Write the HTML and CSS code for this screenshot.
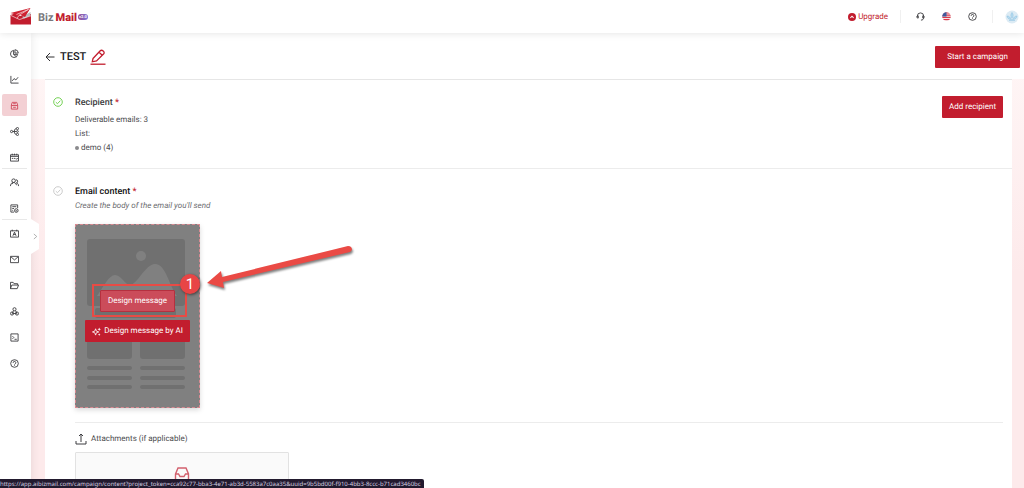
FILE: index.html
```html
<!DOCTYPE html>
<html lang="en">
<head>
  <meta charset="UTF-8" />
  <meta name="viewport" content="width=device-width, initial-scale=1.0"/>
  <title>BizMail - TEST</title>
  <link rel="stylesheet" href="styles.css">
</head>
<body>
  <header class="topbar">
    <a href="#" class="brand" aria-label="BizMail">
      <svg class="brand-mark" viewBox="0 0 22 17">
        <path d="M0.500 7L5 5.500L9 8L14 8L20 6L21 6V16.500H0.500Z" fill="#c21d2e"/>
        <path d="M12 9L20.500 4V7.500L14 10.500Z" fill="#b9b9bd"/>
        <path d="M0.500 5L20.500 0L15 9L10 7L7 10.500L6 6.500Z" fill="#cf2232"/>
        <path d="M6.500 6.500L18.500 1.400L9 7.300L7 10.500M1 7.500L9.500 11.500L21 7.800" fill="none" stroke="#fff" stroke-width=".6"/>
      </svg>
      <span class="brand-name">Biz<b>Mail</b></span>
      <span class="brand-tag">v2.0</span>
    </a>
    <nav class="topbar-nav">
      <a href="#" class="upgrade">
        <svg viewBox="0 0 10 10"><circle cx="5" cy="5" r="5" fill="#c21d2e"/><path d="M3 6L5 4L7 6" fill="none" stroke="#fff" stroke-width="1.300"/></svg>
        Upgrade
      </a>
      <span class="divider"></span>
      <a href="#" class="nav-icon" aria-label="Support">
        <svg class="line-icon" viewBox="0 0 20 20"><path d="M3 12V9a7 7 0 0 1 14 0v4c0 3-2 5-6 5M3 8.500h2v5H4a3 3 0 0 1-2-4M17 8.500h-2v5H16a3 3 0 0 0 2-4"/></svg>
      </a>
      <a href="#" class="nav-icon" aria-label="Language">
        <svg viewBox="0 0 20 20">
          <clipPath id="flag"><circle cx="10" cy="10" r="9.500"/></clipPath>
          <g clip-path="url(#flag)">
            <path fill="#f6e6e8" d="M0 0h20v20H0z"/>
            <path d="M0 2h20M0 7h20M0 12h20M0 17h20" stroke="#d9394a" stroke-width="2.800"/>
            <path fill="#3c5a9c" d="M0 0h10v10H0z"/>
          </g>
        </svg>
      </a>
      <a href="#" class="nav-icon" aria-label="Help">
        <svg class="line-icon" viewBox="0 0 20 20"><use href="#i-help"/></svg>
      </a>
      <span class="divider"></span>
      <a href="#" class="avatar" aria-label="Account">
        <svg viewBox="0 0 14 14">
          <circle cx="7" cy="7" r="6.500" fill="#dcebf4"/>
          <path d="M7 2.500C8.500 4.500 8.500 6 7 8C5.500 6 5.500 4.500 7 2.500ZM2 6C4 6 5.500 7.500 6.500 9.500C4 9.500 2.500 8.500 2 6ZM12 6C10 6 8.500 7.500 7.500 9.500C10 9.500 11.500 8.500 12 6ZM4 10.500H10" fill="#b8dcf0" stroke="#8fc3e2" stroke-width=".6"/>
        </svg>
      </a>
    </nav>
  </header>

  <div class="layout">
    <aside class="sidebar">
      <nav class="menu">
        <a href="#" aria-label="Dashboard"><svg class="line-icon" viewBox="0 0 20 20"><path d="M8 3a8 8 0 1 0 9 9H8zM11 1.500V9h7.500A8 8 0 0 0 11 1.500zM8 12l6 5"/></svg></a>
        <a href="#" aria-label="Reports"><svg class="line-icon" viewBox="0 0 20 20"><path d="M2 2v16h17M5 13l4-5 4 3 5-6"/></svg></a>
        <a href="#" class="active" aria-label="Campaigns"><svg class="line-icon" viewBox="0 0 20 20"><path d="M3 9L5 3h10l2 6v9H3zM3 10h14M7 14h6M7 6h6"/></svg></a>
        <a href="#" aria-label="Automation"><svg class="line-icon" viewBox="0 0 20 20"><circle cx="3.500" cy="10" r="2.500"/><path d="M6 10h8M14 3.500q-4 0-5 6.500q1 6.500 5 6.500"/><circle cx="16.500" cy="3.500" r="2.500"/><circle cx="16.500" cy="10" r="2"/><circle cx="16.500" cy="16.500" r="2.500"/></svg></a>
        <a href="#" aria-label="Calendar"><svg class="line-icon" viewBox="0 0 20 20"><path d="M1 4h18v14H1zM1 7.500h18M5 1.500V5M10 1.500V5M15 1.500V5M4 12h3M8.500 12h3M13 12l1.500 2 3-3"/></svg></a>
      </nav>
      <nav class="menu">
        <a href="#" aria-label="Contacts"><svg class="line-icon" viewBox="0 0 20 20"><circle cx="8" cy="6" r="4"/><path d="M1 18c0-5 3-8 6.500-8s6 2 7 6M13 4a3.500 3.500 0 0 1 1 7c3 0 5 3 5 7M4 14l3-3"/></svg></a>
        <a href="#" aria-label="Forms"><svg class="line-icon" viewBox="0 0 20 20"><path d="M9 18H2V2h15v7M5 6h9M5 10h4M5 14h2"/><circle cx="14" cy="14.500" r="4"/><path d="M12 14.500l1.500 1.500 3-3"/></svg></a>
      </nav>
      <nav class="menu">
        <a href="#" aria-label="Templates"><svg class="line-icon" viewBox="0 0 20 20"><path d="M1 4h18v14H1zM5 1.500V5M15 1.500V5M6.500 15L10 7l3.500 8M8 12h4"/></svg></a>
        <a href="#" aria-label="Messages"><svg class="line-icon" viewBox="0 0 20 20"><path d="M1 3h18v14H1zM2 4l8 7 8-7"/></svg></a>
        <a href="#" aria-label="Files"><svg class="line-icon" viewBox="0 0 20 20"><path d="M1 17V3h6l2 3h8v3M1 17l3-8h15l-3 8z"/></svg></a>
        <a href="#" aria-label="Integrations"><svg class="line-icon" viewBox="0 0 20 20"><circle cx="10" cy="5" r="3.500"/><circle cx="4.500" cy="14.500" r="3.500"/><circle cx="15.500" cy="14.500" r="3.500"/><path d="M8 8l-3 6M12 8l3.500 6M5 14.500h10"/></svg></a>
        <a href="#" aria-label="API"><svg class="line-icon" viewBox="0 0 20 20"><path d="M2 2h16v16H2zM5.500 7l3 3-3 3M10 14h5"/></svg></a>
        <a href="#" aria-label="Help"><svg class="line-icon" viewBox="0 0 20 20"><g id="i-help"><circle cx="10" cy="10" r="8.500"/><path d="M7 8.500a3 3 0 1 1 4.500 2.300Q10 11.500 10 12.500M10 14v1.500"/></g></svg></a>
      </nav>
      <button class="expand" type="button" aria-label="Expand menu">
        <svg viewBox="0 0 6 8"><path d="M1 1l3.500 3L1 7"/></svg>
      </button>
    </aside>

    <main>
      <div class="page-head">
        <a href="#" class="back" aria-label="Back"><svg viewBox="0 0 10 10"><path d="M9.500 5H1M5 1L1 5L5 9"/></svg></a>
        <h1>TEST</h1>
        <button class="rename" type="button" aria-label="Rename"><svg viewBox="0 0 16 16"><path d="M3 9.500L10 2Q11.500 0.500 13.200 2T13.500 5L6.500 12L2.300 12.800ZM9 3.200L12.300 6.300"/><path d="M0.500 15.200H15.500"/></svg></button>
        <button class="btn start" type="button">Start a campaign</button>
      </div>

      <div class="card">
        <section class="step recipient">
          <svg class="check done" viewBox="0 0 10 10"><circle cx="5" cy="5" r="4.300"/><path d="M2.800 5.200L4.500 6.700L7.300 3.700"/></svg>
          <div class="step-body">
            <h2>Recipient <i>*</i></h2>
            <p>Deliverable emails: 3</p>
            <p>List:</p>
            <p class="list-item">demo (4)</p>
          </div>
          <button class="btn" type="button">Add recipient</button>
        </section>

        <section class="step content">
          <svg class="check" viewBox="0 0 10 10"><circle cx="5" cy="5" r="4.300"/><path d="M2.800 5.200L4.500 6.700L7.300 3.700"/></svg>
          <div class="step-body">
            <h2 class="current">Email content <i>*</i></h2>
            <p class="hint">Create the body of the email you'll send</p>

            <div class="preview">
              <svg class="wireframe" viewBox="0 0 125 184">
                <g fill="#707070">
                  <rect x="12" y="15" width="98" height="67" rx="3"/>
                  <rect x="20" y="84" width="81" height="10" rx="2"/>
                  <rect x="12" y="96" width="45" height="39" rx="3"/>
                  <rect x="65" y="96" width="45" height="39" rx="3"/>
                  <rect x="12" y="142" width="45" height="4" rx="2"/>
                  <rect x="65" y="142" width="45" height="4" rx="2"/>
                  <rect x="12" y="152" width="45" height="4" rx="2"/>
                  <rect x="65" y="152" width="45" height="4" rx="2"/>
                  <rect x="12" y="161" width="45" height="4" rx="2"/>
                  <rect x="65" y="161" width="45" height="4" rx="2"/>
                </g>
                <g fill="#808080">
                  <circle cx="66" cy="32" r="5"/>
                  <path d="M22 72C29 62 34 51 40 51C46 51 50 60 54 61C62 62 70 40 80 40C91 40 94 62 102 72Z"/>
                </g>
              </svg>
              <button class="btn design" type="button">Design message</button>
              <button class="btn ai" type="button">
                <svg viewBox="0 0 10 10"><path d="M4 2L4.900 4.600L7.500 5.500L4.900 6.400L4 9L3.100 6.400L0.500 5.500L3.100 4.600Z" fill="none" stroke="#fff" stroke-width=".9"/><path d="M8 0.500L8.500 2L10 2.500L8.500 3L8 4.500L7.500 3L6 2.500L7.500 2ZM8 7L8.400 8.100L9.500 8.500L8.400 8.900L8 10L7.600 8.900L6.500 8.500L7.600 8.100Z" fill="#fff"/></svg>
                Design message by AI
              </button>

              <!-- Tutorial callout -->
              <div class="callout-frame"></div>
              <div class="callout-number">1</div>
              <svg class="callout-arrow" viewBox="0 0 160 50"><path d="M5 40L19 28L20 34L146 3Q150 3 150 7L148 9L21 39L22 45Z"/></svg>
            </div>

            <div class="attachments">
              <h3><svg viewBox="0 0 12 12"><path d="M1 8V11H11V8M6 9V1M4 3L6 1L8 3"/></svg>Attachments (if applicable)</h3>
              <button class="dropzone" type="button" aria-label="Upload attachment">
                <svg viewBox="0 0 16 18"><path d="M1.500 8L4 2H12L14.500 8V17H1.500ZM1.500 8H4.500L6 10.500H10L11.500 8H14.500"/></svg>
              </button>
            </div>
          </div>
        </section>
      </div>
    </main>
  </div>

  <div class="status-url">https://app.aibizmail.com/campaign/content?project_token=cca92c77-bba3-4e71-ab3d-5583a7c0aa35&amp;uuid=9b5bd00f-f910-4bb3-8ccc-b71cad3460bc</div>
</body>
</html>
```
FILE: styles.css
```css
* {
  margin: 0;
  padding: 0;
  box-sizing: border-box;
}

body {
  display: flex;
  flex-direction: column;
  height: 100vh;
  overflow: hidden;
  font-family: Roboto, sans-serif;
  font-size: 8px;
  line-height: 14px;
  text-rendering: geometricPrecision;
  color: #4c4c4f;
  background: #fff;
}

a {
  color: inherit;
  text-decoration: none;
}

button {
  font: inherit;
  text-rendering: inherit;
  border: none;
  background: none;
}

svg {
  display: block;
  flex: none;
}

.line-icon {
  width: 9px;
  height: 9px;
  fill: none;
  stroke: #3c3c40;
  stroke-width: 2;
}

.btn {
  height: 22px;
  padding: 0 7px;
  color: #fff;
  background: #c21d2e;
  border-radius: 1px;
  white-space: nowrap;
}

/* top bar */
.topbar {
  position: relative;
  z-index: 3;
  display: flex;
  flex: none;
  align-items: center;
  justify-content: space-between;
  height: 33px;
  padding: 0 5px 0 10px;
  background: #fff;
  box-shadow: 0 0 8px rgba(0, 0, 0, 0.12);
}

.brand {
  display: flex;
  align-items: center;
}

.brand-mark {
  width: 22px;
  height: 17px;
  margin-right: 6px;
}

.brand-name {
  padding-top: 2px;
  font-size: 11px;
  font-weight: 700;
  color: #77787b;
}

.brand-name b {
  margin-left: 2px;
  color: #c21d2e;
}

.brand-tag {
  height: 6px;
  margin-left: 1px;
  padding: 0 1px;
  font-size: 4px;
  line-height: 6px;
  font-weight: 700;
  color: #fff;
  background: linear-gradient(to right, #9c4a8c, #7b7be0);
  border-radius: 3px;
}

.topbar-nav {
  display: flex;
  align-items: center;
}

.upgrade {
  display: flex;
  align-items: center;
  gap: 2px;
  color: #c21d2e;
}

.upgrade svg {
  width: 8px;
  height: 8px;
}

.divider {
  width: 1px;
  height: 13px;
  margin: 0 12px;
  background: #f0f0f0;
}

.nav-icon {
  padding: 0 3px;
}

.nav-icon + .nav-icon {
  margin-left: 11px;
}

.nav-icon svg {
  width: 9px;
  height: 9px;
}

.avatar svg {
  width: 14px;
  height: 14px;
}

/* sidebar */
.layout {
  display: flex;
  flex: 1;
  min-height: 0;
}

.sidebar {
  position: relative;
  z-index: 2;
  flex: none;
  width: 31px;
  padding: 9px 4px 0 2px;
  background: #fff;
  box-shadow: 0 0 10px rgba(0, 0, 0, 0.1);
}

.menu {
  display: grid;
  gap: 4px;
}

.menu + .menu {
  padding-top: 2px;
  border-top: 1px solid #e8e8e8;
}

.menu a {
  display: grid;
  place-items: center;
  height: 22px;
  border-radius: 2px;
}

.menu .active {
  background: #f3d0d4;
}

.active .line-icon {
  stroke: #d0485a;
}

.expand {
  position: absolute;
  top: 186px;
  left: 31px;
  display: grid;
  place-items: center;
  width: 8px;
  height: 35px;
  background: #fff;
  clip-path: polygon(0 0, 100% 14%, 100% 86%, 0 100%);
}

.expand svg {
  width: 5px;
  height: 7px;
  fill: none;
  stroke: #a0a0a0;
}

/* page */
main {
  display: flex;
  flex: 1;
  flex-direction: column;
  min-width: 0;
  overflow: hidden;
  background: linear-gradient(#fff7f7, #fdeaeb 240px);
}

.page-head {
  display: flex;
  flex: none;
  align-items: center;
  height: 46px;
  padding: 2px 4px 0 14px;
  background: #fff;
}

.back svg {
  width: 10px;
  height: 10px;
  fill: none;
  stroke: #303033;
}

h1 {
  margin-left: 5px;
  font-size: 11px;
  font-weight: 500;
  color: #202024;
}

.rename svg {
  width: 16px;
  height: 16px;
  margin-left: 4px;
  fill: none;
  stroke: #c21d2e;
  stroke-width: 1.3;
}

.start {
  margin-left: auto;
  padding: 0 12px;
}

.card {
  flex: 1;
  min-height: 0;
  margin: 0 12px 0 14px;
  padding: 0 9px 0 8px;
  background: #fff;
  border-top: 1px solid #e6e6e6;
}

.step {
  display: flex;
  align-items: flex-start;
}

.recipient {
  height: 89px;
  margin: 0 -9px 0 -8px;
  padding: 16px 9px 0 8px;
  border-bottom: 1px solid #ececec;
}

.content {
  padding-top: 16px;
}

.check {
  width: 10px;
  height: 10px;
  margin: 1px 12px 0 0;
  fill: none;
  stroke: #c6c6c6;
  stroke-width: 0.9;
}

.done {
  stroke: #66cc44;
}

.step-body {
  flex: 1;
}

h2 {
  margin-bottom: 3px;
  font-size: 9px;
  font-weight: 500;
  color: #3c3c40;
}

h2 i {
  font-style: normal;
  color: #c21d2e;
}

.current {
  margin-bottom: 0;
  color: #111;
}

.list-item::before {
  content: "";
  display: inline-block;
  width: 4px;
  height: 4px;
  margin-right: 2px;
  background: #8a8a8d;
  border-radius: 50%;
}

.hint {
  font-style: italic;
  color: #6c6c70;
}

/* message preview */
.preview {
  position: relative;
  display: flex;
  flex-direction: column;
  align-items: center;
  gap: 8px;
  width: 125px;
  height: 184px;
  margin-top: 11px;
  padding-top: 65px;
  background: #808080;
  border: 1px dashed #d98a92;
  box-shadow: 0 2px 5px rgba(0, 0, 0, 0.15);
}

.wireframe {
  position: absolute;
  inset: -1px;
}

.preview .btn {
  position: relative;
}

.preview .design {
  background: #cb4c5a;
  border: 1px solid #b5303f;
}

.ai {
  display: flex;
  align-items: center;
  gap: 3px;
}

.ai svg {
  width: 9px;
  height: 9px;
}

.callout-frame {
  position: absolute;
  top: 59px;
  left: 16px;
  width: 95px;
  height: 33px;
  border: 2px solid #e84b45;
}

.callout-number {
  position: absolute;
  top: 49px;
  left: 104px;
  width: 20px;
  height: 20px;
  font-size: 15px;
  line-height: 20px;
  text-align: center;
  color: #fff;
  background: #e84545;
  border-radius: 50%;
  box-shadow: 1px 1px 3px rgba(0, 0, 0, 0.5);
}

.callout-arrow {
  position: absolute;
  top: 18px;
  left: 126px;
  width: 160px;
  height: 50px;
  fill: #ea4a45;
  filter: drop-shadow(1px 2px 1px rgba(0, 0, 0, 0.5));
}

/* attachments */
.attachments {
  margin-top: 14px;
  padding-top: 9px;
  border-top: 1px solid #ececec;
}

h3 {
  display: flex;
  align-items: center;
  gap: 4px;
  font-size: 8px;
  font-weight: 400;
}

h3 svg {
  width: 12px;
  height: 12px;
  fill: none;
  stroke: #3c3c40;
}

.dropzone {
  display: flex;
  justify-content: center;
  width: 214px;
  height: 60px;
  margin-top: 6px;
  padding-top: 13px;
  background: #fafafa;
  border: 1px solid #e2e2e2;
  border-radius: 1px;
}

.dropzone svg {
  width: 16px;
  height: 18px;
  fill: none;
  stroke: #d2606d;
  stroke-width: 1.4;
}

/* browser link status */
.status-url {
  position: fixed;
  bottom: 0;
  left: 0;
  z-index: 4;
  height: 9px;
  padding-right: 3px;
  font-family: "Noto Sans", sans-serif;
  font-size: 6px;
  line-height: 10px;
  white-space: nowrap;
  color: #d6cfe0;
  background: #221a2e;
  border-top-right-radius: 2px;
}
```
